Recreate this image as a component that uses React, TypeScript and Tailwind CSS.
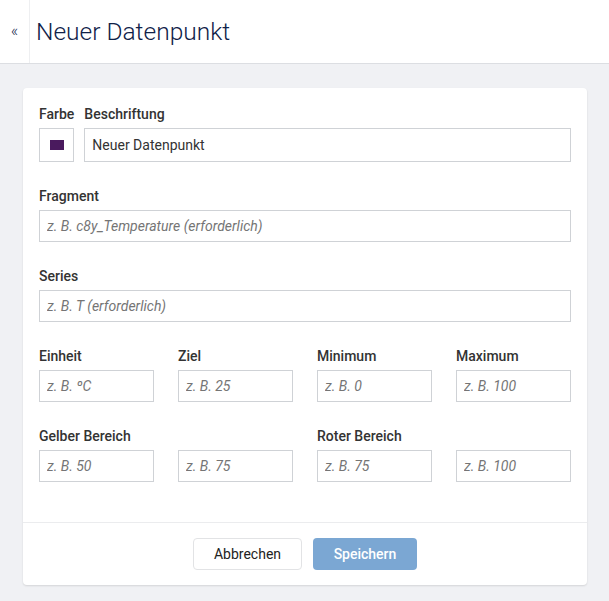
import { useState } from 'react';

const inputCls =
    'w-full h-8 border border-[#cfd2d6] bg-white px-[7px] text-sm text-[#333] outline-none placeholder:italic placeholder:text-[#757575]';

const labelCls = 'block h-5 leading-5 mb-1 text-sm font-medium text-[#333]';

function Field({ label, placeholder }: { label?: string; placeholder: string }) {
    return (
        <div>
            <label className={labelCls}>{label ?? '\u00a0'}</label>
            <input type="text" placeholder={placeholder} className={inputCls} />
        </div>
    );
}

export default function App() {
    const [name, setName] = useState('Neuer Datenpunkt');

    return (
        <div className="min-h-screen bg-[#f0f1f4] font-['Roboto',sans-serif]">
            {/* header */}
            <div className="flex h-16 bg-white border-b border-[#dcdee2]">
                <button className="w-[30px] border-r border-[#eeeff1] flex items-center justify-center text-[#14264a] text-base font-light leading-none pb-[2px]">
                    «
                </button>
                <h1 className="pl-[6px] pt-[2px] flex items-center text-[24.5px] font-light text-[#0f2148]">Neuer Datenpunkt</h1>
            </div>

            <div className="pt-6 pl-[23px]">
                <div className="w-[564px] bg-white rounded-sm shadow-[0_1px_2px_rgba(0,0,0,0.12)]">
                    <div className="px-4 pt-4 pb-10 flex flex-col gap-6">
                        <div className="flex gap-[10px]">
                            <div>
                                <label className={labelCls}>Farbe</label>
                                <div className="w-[35px] h-[34px] border border-[#cfd2d6] flex items-center justify-center">
                                    <div className="w-[14px] h-[10px] bg-[#4a1a5e]" />
                                </div>
                            </div>
                            <div className="flex-1">
                                <label className={labelCls}>Beschriftung</label>
                                <input
                                    type="text"
                                    value={name}
                                    onChange={(e) => setName(e.target.value)}
                                    className={inputCls + ' h-[34px]'}
                                />
                            </div>
                        </div>

                        <Field label="Fragment" placeholder="z. B. c8y_Temperature (erforderlich)" />
                        <Field label="Series" placeholder="z. B. T (erforderlich)" />

                        <div className="grid grid-cols-4 gap-x-6">
                            <Field label="Einheit" placeholder="z. B. ºC" />
                            <Field label="Ziel" placeholder="z. B. 25" />
                            <Field label="Minimum" placeholder="z. B. 0" />
                            <Field label="Maximum" placeholder="z. B. 100" />
                        </div>

                        <div className="grid grid-cols-4 gap-x-6">
                            <Field label="Gelber Bereich" placeholder="z. B. 50" />
                            <Field placeholder="z. B. 75" />
                            <Field label="Roter Bereich" placeholder="z. B. 75" />
                            <Field placeholder="z. B. 100" />
                        </div>
                    </div>

                    <div className="border-t border-[#ebecee] py-[15px] flex justify-center gap-[11px]">
                        <button className="h-8 w-[109px] border border-[#e2e3e5] rounded-sm bg-white text-sm text-[#222]">
                            Abbrechen
                        </button>
                        <button className="h-8 w-[104px] rounded-sm bg-[#7ba7d3] text-sm font-medium text-white">
                            Speichern
                        </button>
                    </div>
                </div>
            </div>
        </div>
    );
}
